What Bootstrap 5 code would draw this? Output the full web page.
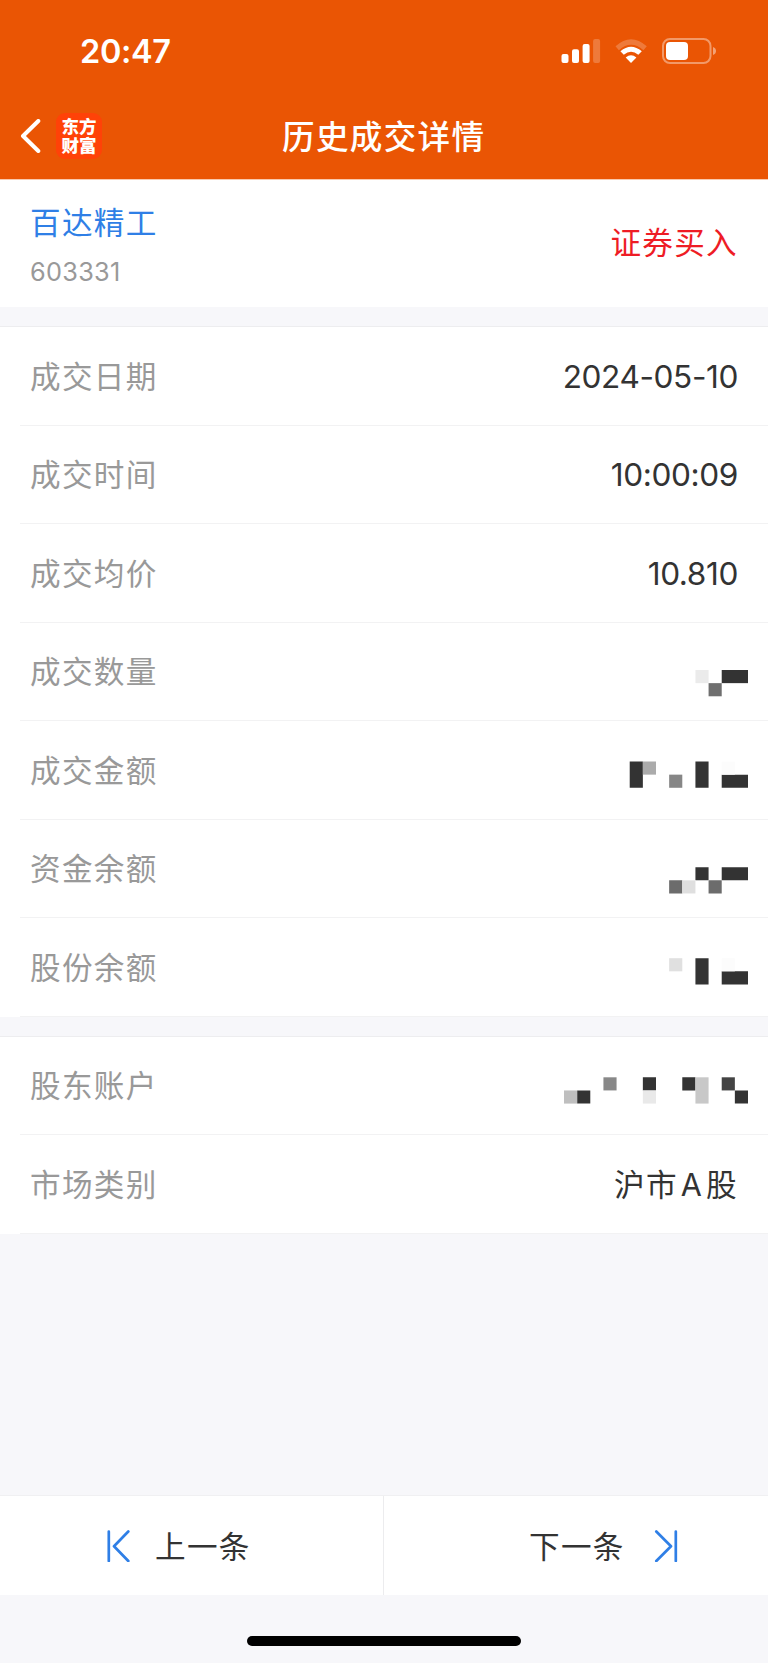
<!DOCTYPE html>
<html lang="zh-CN">
<head>
<meta charset="utf-8">
<meta name="viewport" content="width=device-width, initial-scale=1">
<title>历史成交详情</title>
<link href="https://cdn.jsdelivr.net/npm/bootstrap@5.3.0/dist/css/bootstrap.min.css" rel="stylesheet">
<style>
  body { background: #f7f7fa; font-family: Inter, "Noto Sans CJK SC", sans-serif; color: #333; font-size: 30.6px; line-height: 1.2; }
  .screen { height: 1663px; }
  .top-area { background: #ea5504; height: 179px; box-shadow: 0 1px 0 #f9c9ae; z-index: 1; }
  .status { height: 96px; padding: 6px 51px 0 80px; }
  .clock { font-size: 32.5px; font-weight: 600; letter-spacing: -.35px; padding-top: 1px; }
  .title-bar { height: 83px; padding-left: 18px; }
  .title-text { font-size: 32.6px; font-weight: 500; letter-spacing: 1.3px; top: 22px; left: 282px; }
  .back { margin-top: 23px; }
  .logo { width: 46px; height: 46px; border-radius: 9px; background: #ff4208; font-size: 17.5px; line-height: 19px; font-weight: 900; margin: 17px 0 0 14px; }
  .stock { height: 128px; padding: 0 31px 0 30px; }
  .zh { letter-spacing: 1.3px; }
  .stock-name { color: #2f7fe6; margin-top: 7px; }
  .code { font-size: 25.3px; color: #999; letter-spacing: .3px; margin-top: 15px; }
  .buy { color: #ee1c25; margin-right: -1px; padding-top: 1px; }
  .spacer { height: 20px; border-bottom: 1px solid #ededef; }
  .detail { height: 98.5px; padding: 0 30px; background: linear-gradient(#f2f2f3, #f2f2f3) 20px 100% / 100% 1px no-repeat #fff; }
  .detail .zh { padding-top: 2px; }
  .detail .zh:first-child { color: #999; }
  .market { word-spacing: -7px; }
  .num { font-size: 31.6px; letter-spacing: -.4px; padding-top: 1px; }
  .mosaic { width: 184px; height: 98px; margin-right: -10px; }
  .pager { height: 100px; border-top: 1px solid #f0f0f2; margin-top: auto; }
  .pager .zh { padding-top: 3px; }
  .pager-item:first-child { border-right: 1px solid #ececee; }
  .prev { padding-left: 106px; gap: 25px; }
  .next { padding-left: 145px; gap: 29px; }
  .home-area { height: 68px; padding-top: 41px; }
  .home-bar { width: 274px; height: 10px; border-radius: 5px; background: #000; }
</style>
</head>
<body>
<main class="screen d-flex flex-column overflow-hidden">
  <header class="top-area position-relative text-white flex-shrink-0">
    <div class="status d-flex justify-content-between align-items-center">
      <span class="clock">20:47</span>
      <svg width="156" height="28" viewBox="561 37 156 28" fill="#fff">
        <rect x="561.5" y="54" width="7" height="9" rx="2"/>
        <rect x="572" y="49.3" width="7" height="13.7" rx="2"/>
        <rect x="582.6" y="44" width="7" height="19" rx="2"/>
        <rect x="593.1" y="39" width="7" height="24" rx="2" opacity=".22"/>
        <path d="M615.5 46.3Q631 32 646.8 46.3L643.4 50.2Q631 39.5 618.9 50.2Z" opacity=".22"/>
        <path d="M620.4 51.3Q631 42.2 641.8 51.3L638.3 54.7Q631 48.8 623.8 54.7Z"/>
        <path d="M625.7 57.5Q631 53.2 636.4 57.5L631 63Z"/>
        <rect x="663" y="39" width="47.5" height="24" rx="7" fill="none" stroke="#fff" stroke-width="2" opacity=".4"/>
        <rect x="666" y="42" width="22" height="18" rx="4"/>
        <path d="M713 47Q716 48.200 716 51T713 55Z" opacity=".45"/>
      </svg>
    </div>
    <div class="title-bar d-flex align-items-start position-relative">
      <svg class="back" width="24" height="34" viewBox="18 119 24 34" fill="none" stroke="#fff" stroke-width="4" stroke-linecap="round" stroke-linejoin="round"><path d="M38.300 121L23 136L38.300 151"/></svg>
      <div class="logo d-flex flex-column align-items-center justify-content-center"><span>东方</span><span>财富</span></div>
      <h1 class="title-text position-absolute m-0">历史成交详情</h1>
    </div>
  </header>

  <section class="stock bg-white d-flex justify-content-between align-items-center flex-shrink-0">
    <div>
      <div class="stock-name zh">百达精工</div>
      <div class="code">603331</div>
    </div>
    <div class="buy zh">证券买入</div>
  </section>
  <div class="spacer flex-shrink-0"></div>

  <section>
    <div class="detail d-flex justify-content-between align-items-center"><span class="zh">成交日期</span><span class="num">2024-05-10</span></div>
    <div class="detail d-flex justify-content-between align-items-center"><span class="zh">成交时间</span><span class="num">10:00:09</span></div>
    <div class="detail d-flex justify-content-between align-items-center"><span class="zh">成交均价</span><span class="num">10.810</span></div>
    <div class="detail d-flex justify-content-between align-items-center"><span class="zh">成交数量</span>
      <svg class="mosaic" viewBox="0 0 184 98" fill="#333"><g transform="translate(0 47) scale(13.143)"><path fill="#ebebeb" d="M10 0h1v1h-1z"/><path fill="#6f6f6f" d="M11 1h1v1h-1z"/><path d="M12 0h2v1h-2z"/></g></svg></div>
    <div class="detail d-flex justify-content-between align-items-center"><span class="zh">成交金额</span>
      <svg class="mosaic" viewBox="0 0 184 98" fill="#333"><g transform="translate(0 40.500) scale(13.143)"><path d="M5 0h1v2h-1zM10 0h1v2h-1zM12 1h2v1h-2z"/><path fill="#ababab" d="M6 0h1v1h-1z"/><path fill="#868686" d="M8 1h1v1h-1z"/><path fill="#fcfcfc" d="M12 0h1v1h-1z"/></g></svg></div>
    <div class="detail d-flex justify-content-between align-items-center"><span class="zh">资金余额</span>
      <svg class="mosaic" viewBox="0 0 184 98" fill="#333"><g transform="translate(0 47.200) scale(13.143)"><path d="M10 0h1v1h-1zM12 0h2v1h-2z"/><path fill="#6c6c6c" d="M8 1h1v1h-1zM11 1h1v1h-1z"/><path fill="#dfdfdf" d="M9 1h1v1h-1z"/></g></svg></div>
    <div class="detail d-flex justify-content-between align-items-center"><span class="zh">股份余额</span>
      <svg class="mosaic" viewBox="0 0 184 98" fill="#333"><g transform="translate(0 40.200) scale(13.143)"><path d="M10 0h1v2h-1zM12 1h2v1h-2z"/><path fill="#e0e0e0" d="M8 0h1v1h-1z"/><path fill="#fcfcfc" d="M12 0h1v1h-1z"/></g></svg></div>
  </section>
  <div class="spacer flex-shrink-0"></div>

  <section>
    <div class="detail d-flex justify-content-between align-items-center"><span class="zh">股东账户</span>
      <svg class="mosaic" viewBox="0 0 184 98" fill="#333"><g transform="translate(0 40.300) scale(13.143)"><path d="M1 1h1v1h-1zM6 0h1v1h-1zM9 0h1v1h-1zM13 1h1v1h-1z"/><path fill="#bfbfbf" d="M0 1h1v1h-1z"/><path fill="#888" d="M3 0h1v1h-1z"/><path fill="#e9e9e9" d="M6 1h1v1h-1z"/><path fill="#c8c8c8" d="M10 0h1v2h-1z"/><path fill="#444" d="M12 0h1v1h-1z"/></g></svg></div>
    <div class="detail d-flex justify-content-between align-items-center"><span class="zh">市场类别</span><span class="zh market">沪市 A 股</span></div>
  </section>

  <nav class="pager bg-white d-flex flex-shrink-0">
    <div class="pager-item w-50 d-flex align-items-center prev">
      <svg width="24" height="32" viewBox="106 1529.500 24 32" fill="none" stroke="#2f7fe6" stroke-width="2.700" stroke-linecap="round" stroke-linejoin="round"><path d="M108.800 1531V1560.500M128.300 1531L114 1545.700L128.300 1560.500"/></svg>
      <span class="zh">上一条</span>
    </div>
    <div class="pager-item w-50 d-flex align-items-center next">
      <span class="zh">下一条</span>
      <svg width="24" height="32" viewBox="653 1529.500 24 32" fill="none" stroke="#2f7fe6" stroke-width="2.700" stroke-linecap="round" stroke-linejoin="round"><path d="M674.800 1531V1560.500M655.300 1531L670 1545.700L655.300 1560.500"/></svg>
    </div>
  </nav>
  <div class="home-area flex-shrink-0"><div class="home-bar mx-auto"></div></div>
</main>
<script src="https://cdn.jsdelivr.net/npm/bootstrap@5.3.0/dist/js/bootstrap.bundle.min.js"></script>
</body>
</html>
